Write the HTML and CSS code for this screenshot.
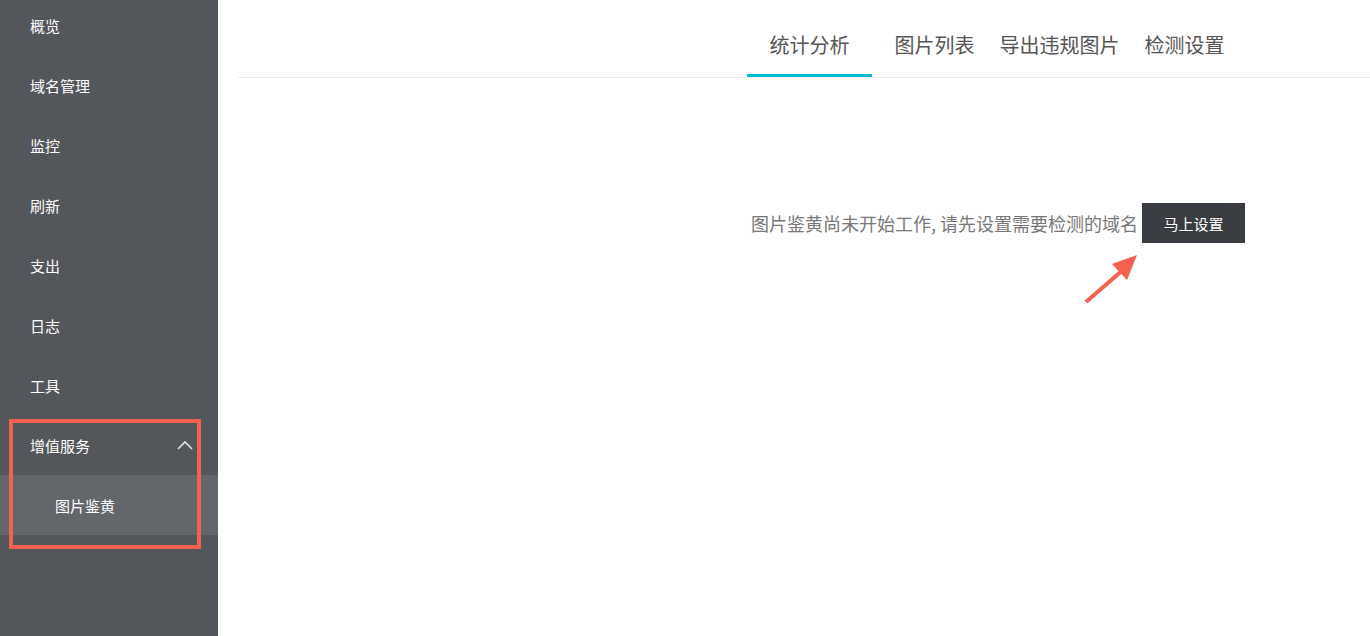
FILE: index.html
```html
<!DOCTYPE html>
<html lang="zh-CN">

<head>
    <meta charset="UTF-8">
    <meta name="viewport" content="width=device-width, initial-scale=1.0">
    <title>图片鉴黄</title>
    <link rel="stylesheet" href="styles.css">
</head>

<body>
    <div class="layout">
        <nav class="sidebar">
            <ul class="menu">
                <li class="item">概览</li>
                <li class="item">域名管理</li>
                <li class="item">监控</li>
                <li class="item">刷新</li>
                <li class="item">支出</li>
                <li class="item">日志</li>
                <li class="item">工具</li>
                <li class="item group">
                    <span>增值服务</span>
                    <svg class="chevron" width="18" height="12" viewBox="0 0 18 12">
                        <path d="M2 10 L9 3 L16 10" fill="none" stroke="#e2e3e4" stroke-width="1.6" />
                    </svg>
                </li>
                <li class="item sub">图片鉴黄</li>
            </ul>
        </nav>
        <main class="main">
            <div class="tabs">
                <div class="tab active">统计分析</div>
                <div class="tab">图片列表</div>
                <div class="tab">导出违规图片</div>
                <div class="tab">检测设置</div>
            </div>
            <div class="notice">
                <span class="msg">图片鉴黄尚未开始工作, 请先设置需要检测的域名</span>
                <button class="setup">马上设置</button>
            </div>
        </main>
    </div>

    <!-- annotations -->
    <div class="markbox"></div>
    <svg class="arrow" width="70" height="60" viewBox="0 0 70 60">
        <line x1="6" y1="52" x2="44" y2="19" stroke="#f4614f" stroke-width="4" stroke-linecap="butt" />
        <polygon points="57,5 32,14 47,30" fill="#f4614f" />
    </svg>
</body>

</html>
```

FILE: styles.css
```css
* {
    margin: 0;
    padding: 0;
    box-sizing: border-box;
}

body {
    font-family: "Noto Sans CJK SC", "Noto Sans", sans-serif;
    background: #fff;
}

.layout {
    display: flex;
    height: 636px;
    overflow: hidden;
}

.sidebar {
    width: 218px;
    flex-shrink: 0;
    background-color: #53565b;
    color: #fff;
    font-size: 15px;
}

.menu {
    list-style: none;
    margin-top: -5px;
}

.item {
    height: 60px;
    display: flex;
    align-items: center;
    padding-left: 30px;
}

.group {
    justify-content: space-between;
    padding-right: 24px;
}

.sub {
    background-color: #63666b;
    padding-left: 55px;
}

.main {
    flex: 1;
    padding-left: 20px;
}

.tabs {
    display: flex;
    height: 78px;
    border-bottom: 1px solid #ececec;
    padding-left: 509px;
    padding-top: 30px;
}

.tab {
    font-size: 20px;
    color: #555;
    padding: 0 12.5px;
    line-height: 30px;
}

.tab.active {
    padding: 0 22.5px;
    margin-right: 10px;
    border-bottom: 3px solid #00bcd4;
}

.notice {
    display: flex;
    align-items: center;
    margin-top: 125px;
    padding-left: 513px;
}

.msg {
    font-size: 18px;
    color: #777;
}

.setup {
    margin-left: 4px;
    width: 103px;
    height: 40px;
    border: none;
    background-color: #393d42;
    color: #fff;
    font-family: inherit;
    font-size: 15px;
    cursor: pointer;
}

.markbox {
    position: absolute;
    left: 9px;
    top: 419px;
    width: 192px;
    height: 130px;
    border: 4px solid #f4614f;
}

.arrow {
    position: absolute;
    left: 1080px;
    top: 250px;
}
```
